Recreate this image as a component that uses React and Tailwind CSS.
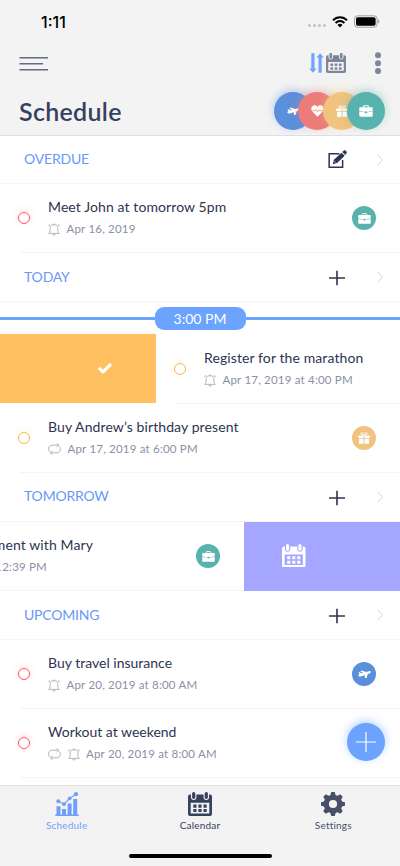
import React from "react";

function Plane({ className }) {
  return (
    <svg viewBox="0 0 24 16" className={className} fill="currentColor">
      <path d="M0.5 4.2 L3.2 3.8 L6.4 5.8 L9.5 5 L4.2 2.2 L7 0.8 L15.2 3.4 L20 1.8 C22 1.3 23.6 1.8 23.8 2.9 C24 4.2 22.8 5.3 21 6 L17.8 7.4 L16 14.2 L13 15 L12.4 9.4 L6.5 11.4 C4.5 12 2.2 11.8 1.4 10.6 L0.2 9 L3 7.6 Z" />
    </svg>
  );
}

function Heart({ className }) {
  return (
    <svg viewBox="0 0 24 22" className={className}>
      <path fill="currentColor" d="M12 21.5 L2.4 12 C-0.4 9 0 4.2 2.6 2 C5.6 -0.4 9.8 0.3 12 3.6 C14.2 0.3 18.4 -0.4 21.4 2 C24 4.2 24.4 9 21.6 12 Z" />
      <path fill="none" stroke="#ec7c79" strokeWidth="1.3" d="M1 10.5 H7 L9 8 L11.8 13 L14.5 8.8 L16 10.5 H23" />
    </svg>
  );
}

function Gift({ className }) {
  return (
    <svg viewBox="0 0 24 24" className={className}>
      <path fill="currentColor" d="M0.5 7 H11 V12 H0.5 Z M13 7 H23.5 V12 H13 Z M2 13.5 H11 V23.5 H2 Z M13 13.5 H22 V23.5 H13 Z" />
      <path fill="none" stroke="currentColor" strokeWidth="1.9" d="M11.5 6.5 C5 6.5 4.6 2 7.4 1.5 C10 1 11.5 4 11.5 6.5 M12.5 6.5 C19 6.5 19.4 2 16.6 1.5 C14 1 12.5 4 12.5 6.5" />
    </svg>
  );
}

function Briefcase({ className }) {
  return (
    <svg viewBox="0 0 26 22" className={className}>
      <path fill="none" stroke="currentColor" strokeWidth="2" d="M8.5 4.5 V2.6 C8.5 1.8 9 1.3 9.8 1.3 H16.2 C17 1.3 17.5 1.8 17.5 2.6 V4.5" />
      <path fill="currentColor" d="M2.5 4 H23.5 C25 4 25.5 4.7 25.5 6 V10.6 C22 12 18 12.6 14.6 12.8 V11.4 H11.4 V12.8 C8 12.6 4 12 0.5 10.6 V6 C0.5 4.7 1 4 2.5 4 Z M0.5 11.6 C4 13 8 13.6 11.4 13.7 V15 H14.6 V13.7 C18 13.6 22 13 25.5 11.6 V19.5 C25.5 21 25 21.6 23.5 21.6 H2.5 C1 21.6 0.5 21 0.5 19.5 Z" />
    </svg>
  );
}

function CalendarIcon({ className }) {
  return (
    <svg viewBox="0 0 24 24" className={className} fill="currentColor">
      <path
        fillRule="evenodd"
        d="M2 2.6 H3 V5.2 A2.7 2.7 0 0 0 8.4 5.2 V2.6 H15.6 V5.2 A2.7 2.7 0 0 0 21 5.2 V2.6 H22 A2 2 0 0 1 24 4.6 V22 A2 2 0 0 1 22 24 H2 A2 2 0 0 1 0 22 V4.6 A2 2 0 0 1 2 2.6 Z M2.7 10.8 V21.4 H21.3 V10.8 Z"
      />
      <rect x="4.1" y="0" width="3.2" height="6.9" rx="1.6" />
      <rect x="16.7" y="0" width="3.2" height="6.9" rx="1.6" />
      <path d="M5.3 12.6 h3.2 v3.1 h-3.2z M10.4 12.6 h3.2 v3.1 h-3.2z M15.5 12.6 h3.2 v3.1 h-3.2z M5.3 17 h3.2 v3.1 h-3.2z M10.4 17 h3.2 v3.1 h-3.2z M15.5 17 h3.2 v3.1 h-3.2z" />
    </svg>
  );
}

function Bell() {
  return (
    <svg viewBox="0 0 12 13" className="h-[13px] w-3 shrink-0 text-[#a3a6ad]" fill="none" stroke="currentColor" strokeWidth="0.8">
      <path d="M0.7 10.4 C1.8 9.8 2.2 8.6 2.2 6.6 V4.2 C2.2 2.4 3.4 1.8 6 1.8 C8.6 1.8 9.8 2.4 9.8 4.2 V6.6 C9.8 8.6 10.2 9.8 11.3 10.4 Z" />
      <path d="M4.6 10.8 C4.8 12.6 7.2 12.6 7.4 10.8 M5 1.6 C5.2 0.6 6.8 0.6 7 1.6 M0.6 3.2 C0.7 2.2 1.2 1.6 2 1.2 M11.4 3.2 C11.3 2.2 10.8 1.6 10 1.2" />
    </svg>
  );
}

function Repeat() {
  return (
    <svg viewBox="0 0 13 12" className="h-3 w-[13px] shrink-0 text-[#a3a6ad]" fill="none" stroke="currentColor" strokeWidth="0.85">
      <path d="M1.6 8.8 C0 6.8 0.2 2.5 4 2.2 H10.6 M8.6 0.3 L10.8 2.2 L8.6 4.3 M11.4 3.4 C13 5.4 12.8 9.5 9 9.8 H2.6 M4.6 7.7 L2.4 9.8 L4.6 11.7" />
    </svg>
  );
}

function Plus() {
  return (
    <svg viewBox="0 0 16 16" className="mt-0.5 size-4 shrink-0 text-[#2d3452]" stroke="currentColor" strokeWidth="1.6">
      <path d="M0 8 H16 M8 0.8 V15.2" />
    </svg>
  );
}

function Edit() {
  return (
    <svg viewBox="0 0 20 19" className="mb-0.5 h-[18px] w-[19px] shrink-0 text-[#2d3452]">
      <path fill="none" stroke="currentColor" strokeWidth="1.6" d="M12 4 H1.2 V18.2 H15.4 V10.5" />
      <path fill="currentColor" d="M5 15 L6.2 10.4 L14.2 2.8 L17.6 6.2 L9.6 13.6 Z M15 2 L16.6 0.7 C17.2 0.1 18 0.1 18.6 0.7 L19.4 1.5 C20 2.1 20 2.9 19.4 3.5 L18.3 5.3 Z" />
      <path stroke="#fff" strokeWidth="0.6" d="M6.6 11.6 L8.4 13.4" />
    </svg>
  );
}

function Chart() {
  return (
    <svg viewBox="0 0 24 24" className="size-6" fill="currentColor">
      <path d="M0.3 22.6 H23.7 V24 H0.3Z M1.5 14.2 h4 v9 h-4z M7 17 h4 v6 h-4z M12.6 11.4 h4 v12 h-4z M18.2 7 h4 v16 h-4z" />
      <path fill="none" stroke="currentColor" strokeWidth="1.2" d="M3.3 9.2 L9 12.2 L14.6 6.4 L21 2.2" />
      <circle cx="3.3" cy="9.2" r="2" />
      <circle cx="9" cy="12.2" r="1.9" />
      <circle cx="14.6" cy="6.4" r="1.9" />
      <circle cx="21" cy="2.2" r="2.1" />
    </svg>
  );
}

function Gear() {
  const teeth = [0, 45, 90, 135, 180, 225, 270, 315];
  return (
    <svg viewBox="-12 -12 24 24" className="size-6">
      <g fill="currentColor">
        {teeth.map((a) => (
          <path key={a} transform={`rotate(${a})`} d="M-4 -7 L-2.5 -9 L-2.1 -11 C-2 -11.8 -1.6 -12 -1 -12 H1 C1.6 -12 2 -11.8 2.1 -11 L2.5 -9 L4 -7 Z" />
        ))}
      </g>
      <circle r="6.7" fill="none" stroke="currentColor" strokeWidth="5.2" />
    </svg>
  );
}

function Wifi() {
  return (
    <svg viewBox="0 0 16 12" className="h-3 w-4" fill="none" stroke="#000" strokeWidth="2">
      <path d="M1 4.3 C5 0.2 11 0.2 15 4.3" />
      <path d="M3.6 7 C6.2 4.4 9.8 4.4 12.4 7" />
      <path fill="#000" stroke="none" d="M5.5 8.9 C7 7.5 9 7.5 10.5 8.9 L8 11.5 Z" />
    </svg>
  );
}

function Battery() {
  return (
    <svg viewBox="0 0 26 13" className="h-[13px] w-[26px]">
      <rect x="0.5" y="0.8" width="22.6" height="11.4" rx="3" fill="none" stroke="#a0a0a0" />
      <rect x="2" y="2.3" width="19.6" height="8.4" rx="1.6" />
      <path d="M24.3 4.6 C25.6 5.2 25.6 7.8 24.3 8.4Z" fill="#777" />
    </svg>
  );
}

function Badge({ color, children }) {
  return <div className={`flex size-6 shrink-0 items-center justify-center rounded-full text-white ${color}`}>{children}</div>;
}

const WorkBadge = () => (
  <Badge color="bg-[#58b3ae]">
    <Briefcase className="h-[11px] w-[13px]" />
  </Badge>
);

function Section({ title, height, action }) {
  return (
    <div className={`flex items-center border-b border-[#f5f5f6] pl-6 pr-[17px] ${height}`}>
      <h2 className="flex-1 pb-px text-[14px] leading-5 tracking-[-0.2px] text-[#6c97fa]">{title}</h2>
      <div className="mr-8 flex w-4 items-center justify-center">{action ?? <Plus />}</div>
      <svg viewBox="0 0 6 12" className="h-3 w-1.5" fill="none" stroke="#d3d4d8" strokeWidth="0.9">
        <path d="M0.5 0.5 L5.5 6 L0.5 11.5" />
      </svg>
    </div>
  );
}

function Ring({ red }) {
  return (
    <span
      className={`size-3 shrink-0 rounded-full border-[1.5px] ${
        red ? "border-[#ff575d] shadow-[0_-2px_7px_#ff575d30]" : "border-[#fdb54e] shadow-[0_-2px_7px_#fdb54e25]"
      }`}
    />
  );
}

function Task({ red, title, titleTracking = "tracking-[0.1px]", date, icons, badge }) {
  return (
    <div className="flex h-[69px] flex-col">
      <div className="flex flex-1 items-center pl-[18px] pr-6">
        <Ring red={red} />
        <div className="ml-[18px] flex-1 whitespace-nowrap pb-0.5">
          <div className={`text-[14px] leading-5 text-[#2d3452] ${titleTracking}`}>{title}</div>
          <div className="mt-1 flex h-4 items-center gap-[6.5px] text-[#8a90a5]">
            {icons}
            <span className="text-[11.5px] leading-4 tracking-[0.2px]">{date}</span>
          </div>
        </div>
        {badge}
      </div>
      <div className="ml-5 h-px bg-[#f5f5f6]" />
    </div>
  );
}

function Bubble({ className, children }) {
  return <div className={`flex size-[38px] shrink-0 items-center justify-center rounded-full text-white ${className}`}>{children}</div>;
}

function Tab({ label, className, children }) {
  return (
    <div className={`flex flex-1 flex-col items-center ${className}`}>
      {children}
      <span className="mt-[3px] text-[10px] leading-3 tracking-[0.2px]">{label}</span>
    </div>
  );
}

export default function App() {
  return (
    <div className="relative flex h-[866px] w-[400px] flex-col overflow-hidden bg-white font-['Lato','Open_Sans',sans-serif]">
      <header className="flex h-[136px] shrink-0 flex-col border-b border-[#dfdfe0] bg-[#f3f3f3]">
        <div className="flex h-[43px] items-center justify-between pl-[41px] pr-5">
          <span className="font-['Inter',sans-serif] text-[16px] font-medium leading-5">1:11</span>
          <div className="flex items-center gap-1.5">
            <div className="mt-2 flex gap-[1.5px]">
              <i className="size-[3.5px] rounded-full bg-[#c2c2c2]" />
              <i className="size-[3.5px] rounded-full bg-[#c2c2c2]" />
              <i className="size-[3.5px] rounded-full bg-[#c2c2c2]" />
              <i className="size-[3.5px] rounded-full bg-[#c2c2c2]" />
            </div>
            <Wifi />
            <Battery />
          </div>
        </div>
        <div className="flex h-10 items-center pl-[19px] pr-[19px]">
          <svg viewBox="0 0 29 15" className="h-[15px] w-[29px]" stroke="#626b86" strokeWidth="1.4">
            <path d="M0.5 1.8 H29 M0.5 7.8 H24 M0.5 13.8 H29" />
          </svg>
          <div className="ml-auto flex items-center">
            <svg viewBox="0 0 15 20" className="mr-0.5 h-5 w-[15px]" fill="#6fa3ff">
              <path d="M2.3 0.3 H5.5 V15.6 H7.6 L3.9 19.8 L0.2 15.6 H2.3Z M9.5 19.7 V4.4 H7.4 L11.1 0.2 L14.8 4.4 H12.7 V19.7Z" />
            </svg>
            <CalendarIcon className="size-5 text-[#7c859b]" />
            <svg viewBox="0 0 6 22" className="ml-[29px] h-[22px] w-1.5" fill="#7c859b">
              <circle cx="3" cy="3.2" r="3" />
              <circle cx="3" cy="11.2" r="3" />
              <circle cx="3" cy="18.9" r="3" />
            </svg>
          </div>
        </div>
        <div className="flex flex-1 items-center justify-between pl-[19px] pr-[15px] pt-1">
          <h1 className="text-[25px] font-semibold leading-8 tracking-[0.3px] text-[#36415f]">Schedule</h1>
          <div className="flex -space-x-[13.7px]">
            <Bubble className="bg-[#5a8fdc] shadow-[0_-2px_8px_#5a8fdc70]">
              <Plane className="h-[9px] w-[13px]" />
            </Bubble>
            <Bubble className="bg-[#ec7c79] shadow-[0_-2px_8px_#ec7c7970]">
              <Heart className="h-3 w-[13px]" />
            </Bubble>
            <Bubble className="bg-[#f0c37e] shadow-[0_-2px_8px_#f0c37e70]">
              <Gift className="size-3" />
            </Bubble>
            <Bubble className="bg-[#58b3ae] shadow-[0_-2px_8px_#58b3ae70]">
              <Briefcase className="h-3 w-3.5" />
            </Bubble>
          </div>
        </div>
      </header>

      <main className="flex flex-1 flex-col">
        <Section title="OVERDUE" height="h-12" action={<Edit />} />
        <Task red title="Meet John at tomorrow 5pm" icons={<Bell />} date="Apr 16, 2019" badge={<WorkBadge />} />
        <Section title="TODAY" height="h-[49px]" />

        <div className="flex h-8 items-center">
          <div className="h-[3px] flex-1 bg-[#6ba3ff]" />
          <div className="flex h-[23px] w-[91px] items-center justify-center rounded-[9px] bg-[#6ba3ff] text-[14px] text-white">3:00 PM</div>
          <div className="h-[3px] flex-1 bg-[#6ba3ff]" />
        </div>

        <div className="flex h-[69px]">
          <div className="flex w-[156px] shrink-0 items-center justify-end bg-[#ffc062] pr-11">
            <svg viewBox="0 0 14 11" className="h-[11px] w-3.5" fill="none" stroke="#fff" strokeWidth="3.2" strokeLinecap="round" strokeLinejoin="round">
              <path d="M1.9 5.8 L5 8.8 L12 2" />
            </svg>
          </div>
          <div className="flex-1 pt-px">
            <Task title="Register for the marathon" icons={<Bell />} date="Apr 17, 2019 at 4:00 PM" />
          </div>
        </div>

        <div className="h-[69px] pt-px">
          <Task
            title="Buy Andrew’s birthday present"
            icons={<Repeat />}
            date="Apr 17, 2019 at 6:00 PM"
            badge={
              <Badge color="bg-[#f0c37e]">
                <Gift className="size-3" />
              </Badge>
            }
          />
        </div>
        <Section title="TOMORROW" height="h-[50px]" />

        <div className="flex h-[69px]">
          <div className="flex w-[244px] items-center justify-between border-b border-[#f5f5f6] pr-6">
            <div className="flex w-[93px] flex-col overflow-hidden whitespace-nowrap pb-0.5">
              <div className="flex justify-end text-[14px] leading-5 tracking-[0.1px] text-[#2d3452]">
                <span>Appointment with Mary</span>
              </div>
              <div className="mt-1 flex justify-end pr-[46px] text-[11.5px] leading-4 tracking-[0.2px] text-[#8a90a5]">
                <span>12:39 PM</span>
              </div>
            </div>
            <WorkBadge />
          </div>
          <div className="flex flex-1 items-center bg-[#a4a6ff] pb-0.5 pl-[38px]">
            <CalendarIcon className="size-[23.5px] text-white" />
          </div>
        </div>

        <Section title="UPCOMING" height="h-[49px]" />
        <Task
          red
          title="Buy travel insurance"
          titleTracking="tracking-[0px]"
          icons={<Bell />}
          date="Apr 20, 2019 at 8:00 AM"
          badge={
            <Badge color="bg-[#5a8fdc]">
              <Plane className="h-[9px] w-[13px]" />
            </Badge>
          }
        />
        <Task
          red
          title="Workout at weekend"
          titleTracking="tracking-[0px]"
          icons={
            <>
              <Repeat />
              <Bell />
            </>
          }
          date="Apr 20, 2019 at 8:00 AM"
        />
      </main>

      <button className="absolute bottom-[105px] right-[15px] flex size-[38px] items-center justify-center rounded-full bg-[#6ba3ff] shadow-[0_-2px_8px_#6ba3ff80]">
        <svg viewBox="0 0 20 20" className="size-5" stroke="#fff" strokeWidth="1.2">
          <path d="M0 10 H20 M10 0 V20" />
        </svg>
      </button>

      <footer className="flex h-[81px] shrink-0 flex-col items-center border-t border-[#e2e2e3] bg-[#f3f3f3]">
        <nav className="flex w-full flex-1 pt-1.5">
          <Tab label="Schedule" className="text-[#6f9ffa]">
            <Chart />
          </Tab>
          <Tab label="Calendar" className="text-[#36415c]">
            <CalendarIcon className="size-6" />
          </Tab>
          <Tab label="Settings" className="text-[#465068]">
            <Gear />
          </Tab>
        </nav>
        <div className="mb-2 h-1 w-[143px] rounded-full bg-black" />
      </footer>
    </div>
  );
}
